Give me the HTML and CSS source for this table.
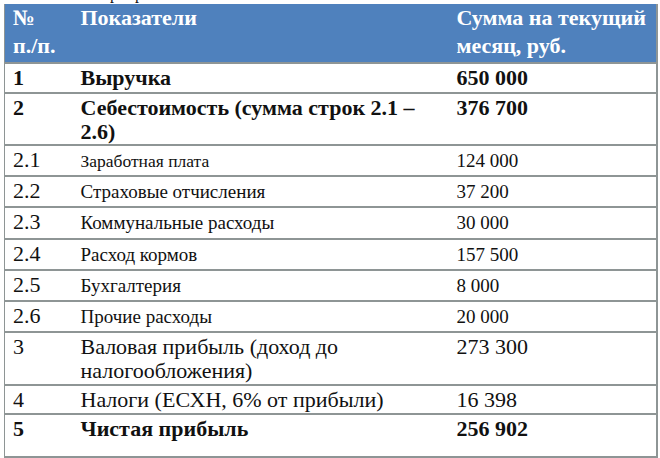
FILE: index.html
```html
<!DOCTYPE html>
<html>
<head>
<meta charset="utf-8">
<link rel="stylesheet" href="styles.css">
</head>
<body>
<div class="caption"><span class="cap-inner"><span class="g1">р</span><span class="g2">р</span></span></div>
<table class="fin">
  <colgroup>
    <col class="c1"><col class="c2"><col class="c3">
  </colgroup>
  <thead>
    <tr class="head">
      <th>№<br>п./п.</th>
      <th>Показатели</th>
      <th>Сумма на текущий<br>месяц, руб.</th>
    </tr>
  </thead>
  <tbody>
    <tr class="b p2"><td>1</td><td>Выручка</td><td>650 000</td></tr>
    <tr class="b p0"><td>2</td><td>Себестоимость (сумма строк 2.1 –<br>2.6)</td><td>376 700</td></tr>
    <tr class="sub p2"><td>2.1</td><td class="lbl narrow">Заработная плата</td><td class="val">124 000</td></tr>
    <tr class="sub p2"><td>2.2</td><td class="lbl">Страховые отчисления</td><td class="val">37 200</td></tr>
    <tr class="sub p3"><td>2.3</td><td class="lbl">Коммунальные расходы</td><td class="val">30 000</td></tr>
    <tr class="sub p2"><td>2.4</td><td class="lbl">Расход кормов</td><td class="val">157 500</td></tr>
    <tr class="sub p2"><td>2.5</td><td class="lbl">Бухгалтерия</td><td class="val">8 000</td></tr>
    <tr class="sub p2"><td>2.6</td><td class="lbl">Прочие расходы</td><td class="val">20 000</td></tr>
    <tr class="reg p1"><td>3</td><td>Валовая прибыль (доход до<br>налогообложения)</td><td>273 300</td></tr>
    <tr class="reg p1"><td>4</td><td>Налоги (ЕСХН, 6% от прибыли)</td><td>16 398</td></tr>
    <tr class="b p15"><td>5</td><td>Чистая прибыль</td><td>256 902</td></tr>
  </tbody>
</table>
</body>
</html>
```

FILE: styles.css
```css
html, body {
  margin: 0;
  padding: 0;
  background: #ffffff;
}
body {
  font-family: "Liberation Serif", "Times New Roman", serif;
  color: #111111;
}
.fin, .fin th, .fin td, .caption {
  font-family: "Liberation Serif", "Times New Roman", serif;
}
.caption {
  height: 4px;
  overflow: hidden;
  font-size: 16px;
  line-height: 16px;
}
.cap-inner {
  display: block;
  margin-top: -14px;
  padding-left: 110px;
}
.g2 {
  margin-left: 17px;
}
.fin {
  margin-left: 4px;
  width: 652px;
  border-collapse: collapse;
  table-layout: fixed;
  border-left: 1px solid #8e9595;
  border-right: 2px solid #8e9595;
  border-bottom: 2px solid #8e9595;
}
.c1 { width: 68px; }
.c2 { width: 376px; }
.c3 { width: 208px; }
.head th {
  background: #4f81bd;
  color: #ffffff;
  font-weight: bold;
  font-size: 22px;
  line-height: 28px;
  padding: 0 0 2px 8px;
  text-align: left;
  vertical-align: top;
  border: none;
}
.fin td {
  padding: 2px 0 0 8px;
  vertical-align: baseline;
  font-size: 22px;
  line-height: 24px;
  border-top: 2px solid #8e9595;
  white-space: nowrap;
}
.b td { font-weight: bold; }
.sub td.lbl { font-size: 19px; }
.sub td.narrow { font-size: 17.5px; }
.sub td.val { font-size: 19px; }
.p0 td { padding-bottom: 0; }
.p1 td { padding-bottom: 1px; }
.p2 td { padding-bottom: 2px; }
.p3 td { padding-bottom: 3px; }
.p15 td { padding-bottom: 15px; }
```
